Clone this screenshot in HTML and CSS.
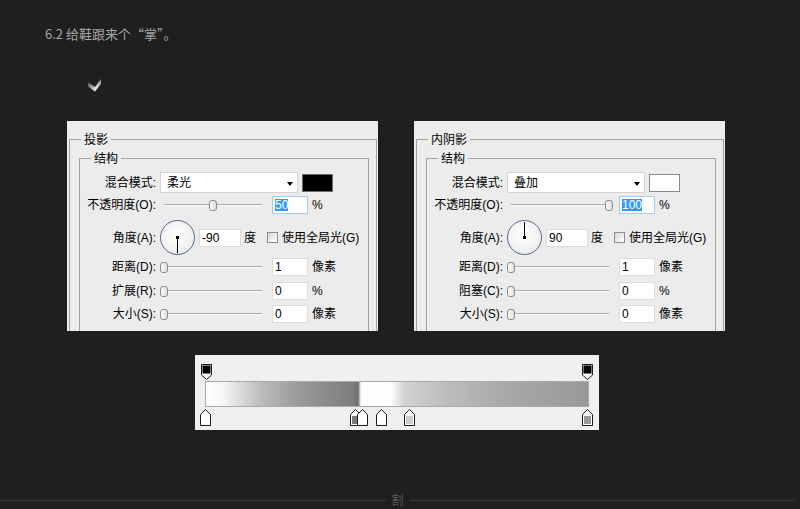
FILE: index.html
```html
<!DOCTYPE html>
<html lang="zh-CN">
<head>
<meta charset="utf-8">
<title>6.2 给鞋跟来个“掌”</title>
<link rel="stylesheet" href="styles.css">
</head>
<body>
<div class="page">
  <p class="title">6.2 给鞋跟来个“掌”。</p>

  <svg class="mark" width="15" height="15" viewBox="0 0 15 15" aria-hidden="true">
    <defs>
      <linearGradient id="mkA" x1="0" y1="0" x2="1" y2="1">
        <stop offset="0" stop-color="#4a4a4a"/>
        <stop offset="1" stop-color="#f2f2f2"/>
      </linearGradient>
      <linearGradient id="mkB" x1="0" y1="1" x2="1" y2="0">
        <stop offset="0" stop-color="#ffffff"/>
        <stop offset="1" stop-color="#8a8a8a"/>
      </linearGradient>
    </defs>
    <path d="M1 4 L8 9 L8 13.5 L1 8.5 Z" fill="url(#mkA)"/>
    <path d="M8 9 L14 1 L14 6 L8 13.5 Z" fill="url(#mkB)"/>
  </svg>

  <div class="panels">
    <!-- 投影 -->
    <section class="panel">
      <div class="group outer">
        <div class="legend">投影</div>
        <div class="group inner">
          <div class="legend">结构</div>

          <div class="row r-blend">
            <span class="lbl">混合模式:</span>
            <div class="combo"><span>柔光</span><i class="arrow"></i></div>
            <div class="swatch swatch-black"></div>
          </div>

          <div class="row r-opacity">
            <span class="lbl">不透明度(O):</span>
            <div class="slider"><div class="track"></div><div class="rail"><i class="thumb" style="left:50%"></i></div></div>
            <div class="field focus"><span class="sel">50</span></div>
            <span class="unit">%</span>
          </div>

          <div class="row r-angle">
            <span class="lbl">角度(A):</span>
            <div class="dial"><i class="hand hand-down"></i><i class="dot"></i></div>
            <div class="field wide">-90</div>
            <span class="unit deg">度</span>
            <span class="check"></span>
            <span class="check-lbl">使用全局光(G)</span>
          </div>

          <div class="row r-dist">
            <span class="lbl">距离(D):</span>
            <div class="slider"><div class="track"></div><div class="rail"><i class="thumb" style="left:0%"></i></div></div>
            <div class="field">1</div>
            <span class="unit">像素</span>
          </div>

          <div class="row r-spread">
            <span class="lbl">扩展(R):</span>
            <div class="slider"><div class="track"></div><div class="rail"><i class="thumb" style="left:0%"></i></div></div>
            <div class="field">0</div>
            <span class="unit">%</span>
          </div>

          <div class="row r-size">
            <span class="lbl">大小(S):</span>
            <div class="slider"><div class="track"></div><div class="rail"><i class="thumb" style="left:0%"></i></div></div>
            <div class="field">0</div>
            <span class="unit">像素</span>
          </div>
        </div>
      </div>
    </section>

    <!-- 内阴影 -->
    <section class="panel">
      <div class="group outer">
        <div class="legend">内阴影</div>
        <div class="group inner">
          <div class="legend">结构</div>

          <div class="row r-blend">
            <span class="lbl">混合模式:</span>
            <div class="combo"><span>叠加</span><i class="arrow"></i></div>
            <div class="swatch swatch-white"></div>
          </div>

          <div class="row r-opacity">
            <span class="lbl">不透明度(O):</span>
            <div class="slider"><div class="track"></div><div class="rail"><i class="thumb" style="left:100%"></i></div></div>
            <div class="field focus"><span class="sel">100</span></div>
            <span class="unit">%</span>
          </div>

          <div class="row r-angle">
            <span class="lbl">角度(A):</span>
            <div class="dial"><i class="hand hand-up"></i><i class="dot"></i></div>
            <div class="field wide">90</div>
            <span class="unit deg">度</span>
            <span class="check"></span>
            <span class="check-lbl">使用全局光(G)</span>
          </div>

          <div class="row r-dist">
            <span class="lbl">距离(D):</span>
            <div class="slider"><div class="track"></div><div class="rail"><i class="thumb" style="left:0%"></i></div></div>
            <div class="field">1</div>
            <span class="unit">像素</span>
          </div>

          <div class="row r-spread">
            <span class="lbl">阻塞(C):</span>
            <div class="slider"><div class="track"></div><div class="rail"><i class="thumb" style="left:0%"></i></div></div>
            <div class="field">0</div>
            <span class="unit">%</span>
          </div>

          <div class="row r-size">
            <span class="lbl">大小(S):</span>
            <div class="slider"><div class="track"></div><div class="rail"><i class="thumb" style="left:0%"></i></div></div>
            <div class="field">0</div>
            <span class="unit">像素</span>
          </div>
        </div>
      </div>
    </section>
  </div>

  <!-- 渐变编辑器 -->
  <div class="grad">
    <svg class="stop stop-top" style="left:6px" width="11" height="16" viewBox="0 0 11 16">
      <path d="M0.5 0.5 H10.5 V11 L5.5 15.5 L0.5 11 Z" fill="#f4f4f4" stroke="#1a1a1a"/>
      <rect x="1.5" y="1.5" width="8" height="8" fill="#000"/>
    </svg>
    <svg class="stop stop-top" style="left:387px" width="11" height="16" viewBox="0 0 11 16">
      <path d="M0.5 0.5 H10.5 V11 L5.5 15.5 L0.5 11 Z" fill="#f4f4f4" stroke="#1a1a1a"/>
      <rect x="1.5" y="1.5" width="8" height="8" fill="#000"/>
    </svg>

    <div class="bar"></div>

    <svg class="stop stop-bot" style="left:5px" width="11" height="17" viewBox="0 0 11 17">
      <path d="M5.5 0.5 L10.5 5.5 V16.5 H0.5 V5.5 Z" fill="#fff" stroke="#1a1a1a"/>
    </svg>
    <svg class="stop stop-bot" style="left:155px" width="11" height="17" viewBox="0 0 11 17">
      <path d="M5.5 0.5 L10.5 5.5 V16.5 H0.5 V5.5 Z" fill="#fff" stroke="#1a1a1a"/>
      <rect x="2" y="7" width="7" height="8" fill="#7a7a7a"/>
    </svg>
    <svg class="stop stop-bot" style="left:162px" width="11" height="17" viewBox="0 0 11 17">
      <path d="M5.5 0.5 L10.5 5.5 V16.5 H0.5 V5.5 Z" fill="#fff" stroke="#1a1a1a"/>
    </svg>
    <svg class="stop stop-bot" style="left:181px" width="11" height="17" viewBox="0 0 11 17">
      <path d="M5.5 0.5 L10.5 5.5 V16.5 H0.5 V5.5 Z" fill="#fff" stroke="#1a1a1a"/>
    </svg>
    <svg class="stop stop-bot" style="left:209px" width="11" height="17" viewBox="0 0 11 17">
      <path d="M5.5 0.5 L10.5 5.5 V16.5 H0.5 V5.5 Z" fill="#fff" stroke="#1a1a1a"/>
      <rect x="2" y="7" width="7" height="8" fill="#cdcdcd"/>
    </svg>
    <svg class="stop stop-bot" style="left:387px" width="11" height="17" viewBox="0 0 11 17">
      <path d="M5.5 0.5 L10.5 5.5 V16.5 H0.5 V5.5 Z" fill="#fff" stroke="#1a1a1a"/>
      <rect x="2" y="7" width="7" height="8" fill="#999"/>
    </svg>
  </div>

  <div class="divider">
    <span class="dline"></span>
    <span class="dtext">割</span>
    <span class="dline"></span>
  </div>
</div>
</body>
</html>
```

FILE: styles.css
```css
* { box-sizing: border-box; }

html, body {
  margin: 0;
  padding: 0;
}

body {
  width: 800px;
  height: 509px;
  overflow: hidden;
  background: #1f1f1f;
  font-family: "Noto Sans CJK SC", sans-serif;
}

.page {
  padding-top: 25px;
}

.title {
  margin: 0 0 0 45px;
  font-size: 13px;
  line-height: 17px;
  color: #a6a6a6;
}

.mark {
  display: block;
  margin: 36px 0 0 87px;
}

/* ---------- dialogs ---------- */
.panels {
  display: flex;
  gap: 36px;
  margin: 28px 0 0 67px;
}

.panel {
  width: 311px;
  height: 210px;
  overflow: hidden;
  background: #ececec;
  padding: 18px 1px 0 2px;
  font-family: "Liberation Sans", "Noto Sans CJK SC", sans-serif;
  font-size: 12px;
  line-height: 14px;
  color: #000;
}

.group {
  border: 1px solid #a3a3a3;
  border-bottom: none;
}

.outer {
  height: 230px;
}

.inner {
  margin: 11px 7px 0 9px;
  height: 220px;
}

.legend {
  width: fit-content;
  height: 14px;
  margin: -7px 0 0 11px;
  padding: 0 3px;
  background: #ececec;
  line-height: 14px;
}

.row {
  display: flex;
  align-items: center;
}

.r-blend   { height: 21px; margin-top: 6px; }
.r-opacity { height: 18px; margin-top: 3px; }
.r-angle   { height: 35px; margin-top: 6px; }
.r-dist    { height: 18px; margin-top: 3px; }
.r-spread  { height: 18px; margin-top: 6px; }
.r-size    { height: 18px; margin-top: 5px; }

.lbl {
  flex: none;
  width: 76px;
  text-align: right;
  white-space: nowrap;
}

/* combo box */
.combo {
  flex: none;
  width: 138px;
  height: 21px;
  margin-left: 4px;
  background: #fff;
  border: 1px solid #d4d4d4;
  display: flex;
  align-items: center;
  justify-content: space-between;
  padding: 0 4px 0 6px;
}

.arrow {
  width: 0;
  height: 0;
  margin-top: 2px;
  border-top: 4px solid #000;
  border-left: 3.5px solid transparent;
  border-right: 3.5px solid transparent;
}

.swatch {
  flex: none;
  width: 31px;
  height: 18px;
  margin-left: 4px;
  border: 1px solid #6e6e6e;
}

.swatch-black { background: #000; }
.swatch-white { background: #fff; border-color: #8a8a8a; }

/* slider */
.slider {
  flex: none;
  position: relative;
  width: 106px;
  height: 18px;
  margin-left: 4px;
}

.track {
  position: absolute;
  left: 4px;
  right: 4px;
  top: 8px;
  height: 2px;
  border-top: 1px solid #a9a9a9;
  background: #fbfbfb;
}

.rail {
  position: absolute;
  left: 4px;
  right: 4px;
  top: 0;
  bottom: 0;
}

.thumb {
  position: absolute;
  top: 4px;
  width: 8px;
  height: 11px;
  margin-left: -4px;
  border: 1px solid #8c8c8c;
  border-radius: 3px;
  background: linear-gradient(to right, #ffffff, #dcdcdc);
}

/* text fields */
.field {
  flex: none;
  width: 36px;
  height: 18px;
  margin-left: 6px;
  background: #fff;
  border: 1px solid #dcdcdc;
  padding-left: 2px;
  display: flex;
  align-items: center;
  font-family: "Liberation Sans", sans-serif;
  font-size: 12px;
}

.field.focus {
  border-color: #a9cbeb;
}

.field.wide {
  width: 42px;
  margin-left: 4px;
}

.sel {
  display: inline-block;
  line-height: 12px;
  background: #3399ff;
  color: #fff;
}

.unit {
  margin-left: 4px;
  white-space: nowrap;
}

.unit.deg {
  margin-left: 3px;
}

/* angle dial */
.dial {
  flex: none;
  position: relative;
  width: 35px;
  height: 35px;
  margin-left: 4px;
  border-radius: 50%;
  border: 1.5px solid #56688a;
  background: radial-gradient(circle at 45% 40%, #fdfdfd 0%, #f2f2f2 60%, #e2e2e2 100%);
}

.hand {
  position: absolute;
  left: 16px;
  width: 1px;
  height: 16px;
  background: #000;
}

.hand-down { top: 16px; }
.hand-up   { bottom: 16px; }

.dot {
  position: absolute;
  left: 15px;
  top: 15px;
  width: 3px;
  height: 3px;
  background: #000;
}

/* checkbox */
.check {
  flex: none;
  width: 11px;
  height: 11px;
  margin-left: 11px;
  border: 1px solid #8d8d8d;
  background: linear-gradient(135deg, #d6d6d6 0%, #f4f4f4 70%, #ffffff 100%);
}

.check-lbl {
  margin-left: 4px;
  white-space: nowrap;
}

/* ---------- gradient editor ---------- */
.grad {
  position: relative;
  width: 404px;
  height: 75px;
  margin: 24px 0 0 195px;
  padding: 26px 0 0 10px;
  background: #f0f0f0;
}

.bar {
  width: 384px;
  height: 26px;
  border: 1px solid #a9a9a9;
  background: linear-gradient(to right,
    #ffffff 0px,
    #f8f8f8 15px,
    #bcbcbc 55px,
    #9c9c9c 90px,
    #7c7c7c 148px,
    #6c6c6c 152px,
    #ffffff 155px,
    #fdfdfd 185px,
    #d2d2d2 198px,
    #bdbdbd 240px,
    #a8a8a8 300px,
    #999999 382px);
}

.stop {
  position: absolute;
  display: block;
}

.stop-top { top: 9px; }
.stop-bot { top: 54px; }

/* ---------- divider ---------- */
.divider {
  display: flex;
  align-items: center;
  width: 795px;
  height: 14px;
  margin-top: 63px;
}

.dline {
  flex: 1;
  height: 1px;
  background: #3a3a3a;
}

.dtext {
  padding: 0 6px;
  font-size: 12px;
  line-height: 14px;
  color: #595959;
}
```
